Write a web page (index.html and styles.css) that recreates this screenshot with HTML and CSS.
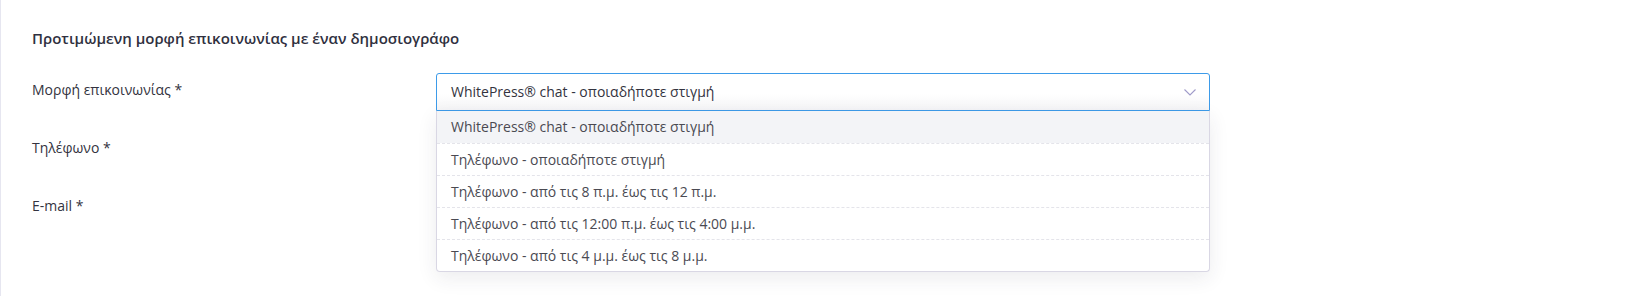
FILE: index.html
```html
<!DOCTYPE html>
<html lang="el">
<head>
    <meta charset="UTF-8">
    <title>Μορφή επικοινωνίας</title>
    <link rel="stylesheet" href="styles.css">
</head>
<body>
    <div class="panel">
        <h3 class="panel-title">Προτιμώμενη μορφή επικοινωνίας με έναν δημοσιογράφο</h3>

        <div class="form-row">
            <label class="form-label">Μορφή επικοινωνίας *</label>
            <div class="select open">
                <div class="select-value">
                    <span>WhitePress® chat - οποιαδήποτε στιγμή</span>
                    <svg class="select-arrow" width="12" height="7" viewBox="0 0 12 7">
                        <path d="M0.5 0.5 L6 6 L11.5 0.5" fill="none" stroke="#9f9bc9" stroke-width="1.1"/>
                    </svg>
                </div>
                <ul class="select-options">
                    <li class="option active">WhitePress® chat - οποιαδήποτε στιγμή</li>
                    <li class="option">Τηλέφωνο - οποιαδήποτε στιγμή</li>
                    <li class="option">Τηλέφωνο - από τις 8 π.μ. έως τις 12 π.μ.</li>
                    <li class="option">Τηλέφωνο - από τις 12:00 π.μ. έως τις 4:00 μ.μ.</li>
                    <li class="option">Τηλέφωνο - από τις 4 μ.μ. έως τις 8 μ.μ.</li>
                </ul>
            </div>
        </div>

        <div class="form-row">
            <label class="form-label">Τηλέφωνο *</label>
            <div class="field"></div>
        </div>

        <div class="form-row">
            <label class="form-label">E-mail *</label>
            <div class="field"></div>
        </div>
    </div>
</body>
</html>
```

FILE: styles.css
```css
* {
    margin: 0;
    padding: 0;
    box-sizing: border-box;
}

body {
    font-family: "Open Sans", "Noto Sans", sans-serif;
    font-size: 14px;
    line-height: 20px;
    color: #333340;
    background-color: #fff;
    height: 296px;
    overflow: hidden;
}

.panel {
    border-left: 1px solid #e6e6f0;
    height: 100%;
    padding: 28px 0 0 31px;
}

.panel-title {
    font-size: 15px;
    font-weight: 600;
    line-height: 20px;
    color: #2f3040;
    margin-bottom: 25px;
}

.form-row {
    display: grid;
    grid-template-columns: 404px 774px;
    height: 38px;
    margin-bottom: 20px;
}

.form-label {
    padding-top: 7px;
    color: #333340;
}

.select {
    position: relative;
}

.select-value {
    height: 38px;
    display: flex;
    align-items: center;
    justify-content: space-between;
    padding: 0 13px 0 14px;
    border: 1px solid #3d9be9;
    border-radius: 3px;
    background: linear-gradient(#fff 55%, #f5f5f7);
    color: #333340;
}

.select.open .select-value {
    border-bottom-left-radius: 0;
    border-bottom-right-radius: 0;
}

.select-options {
    list-style: none;
    position: absolute;
    top: 100%;
    left: 0;
    right: 0;
    background-color: #fff;
    border: 1px solid #d9d7e4;
    border-top: none;
    border-radius: 0 0 4px 4px;
    box-shadow: 0 6px 20px rgba(40, 40, 70, 0.09);
    z-index: 10;
}

.option {
    height: 32px;
    padding: 6px 14px;
    color: #4a4a52;
}

.option + .option {
    border-top: 1px dashed #e4e4ea;
}

.option.active {
    background-color: #f3f4f7;
}
```
